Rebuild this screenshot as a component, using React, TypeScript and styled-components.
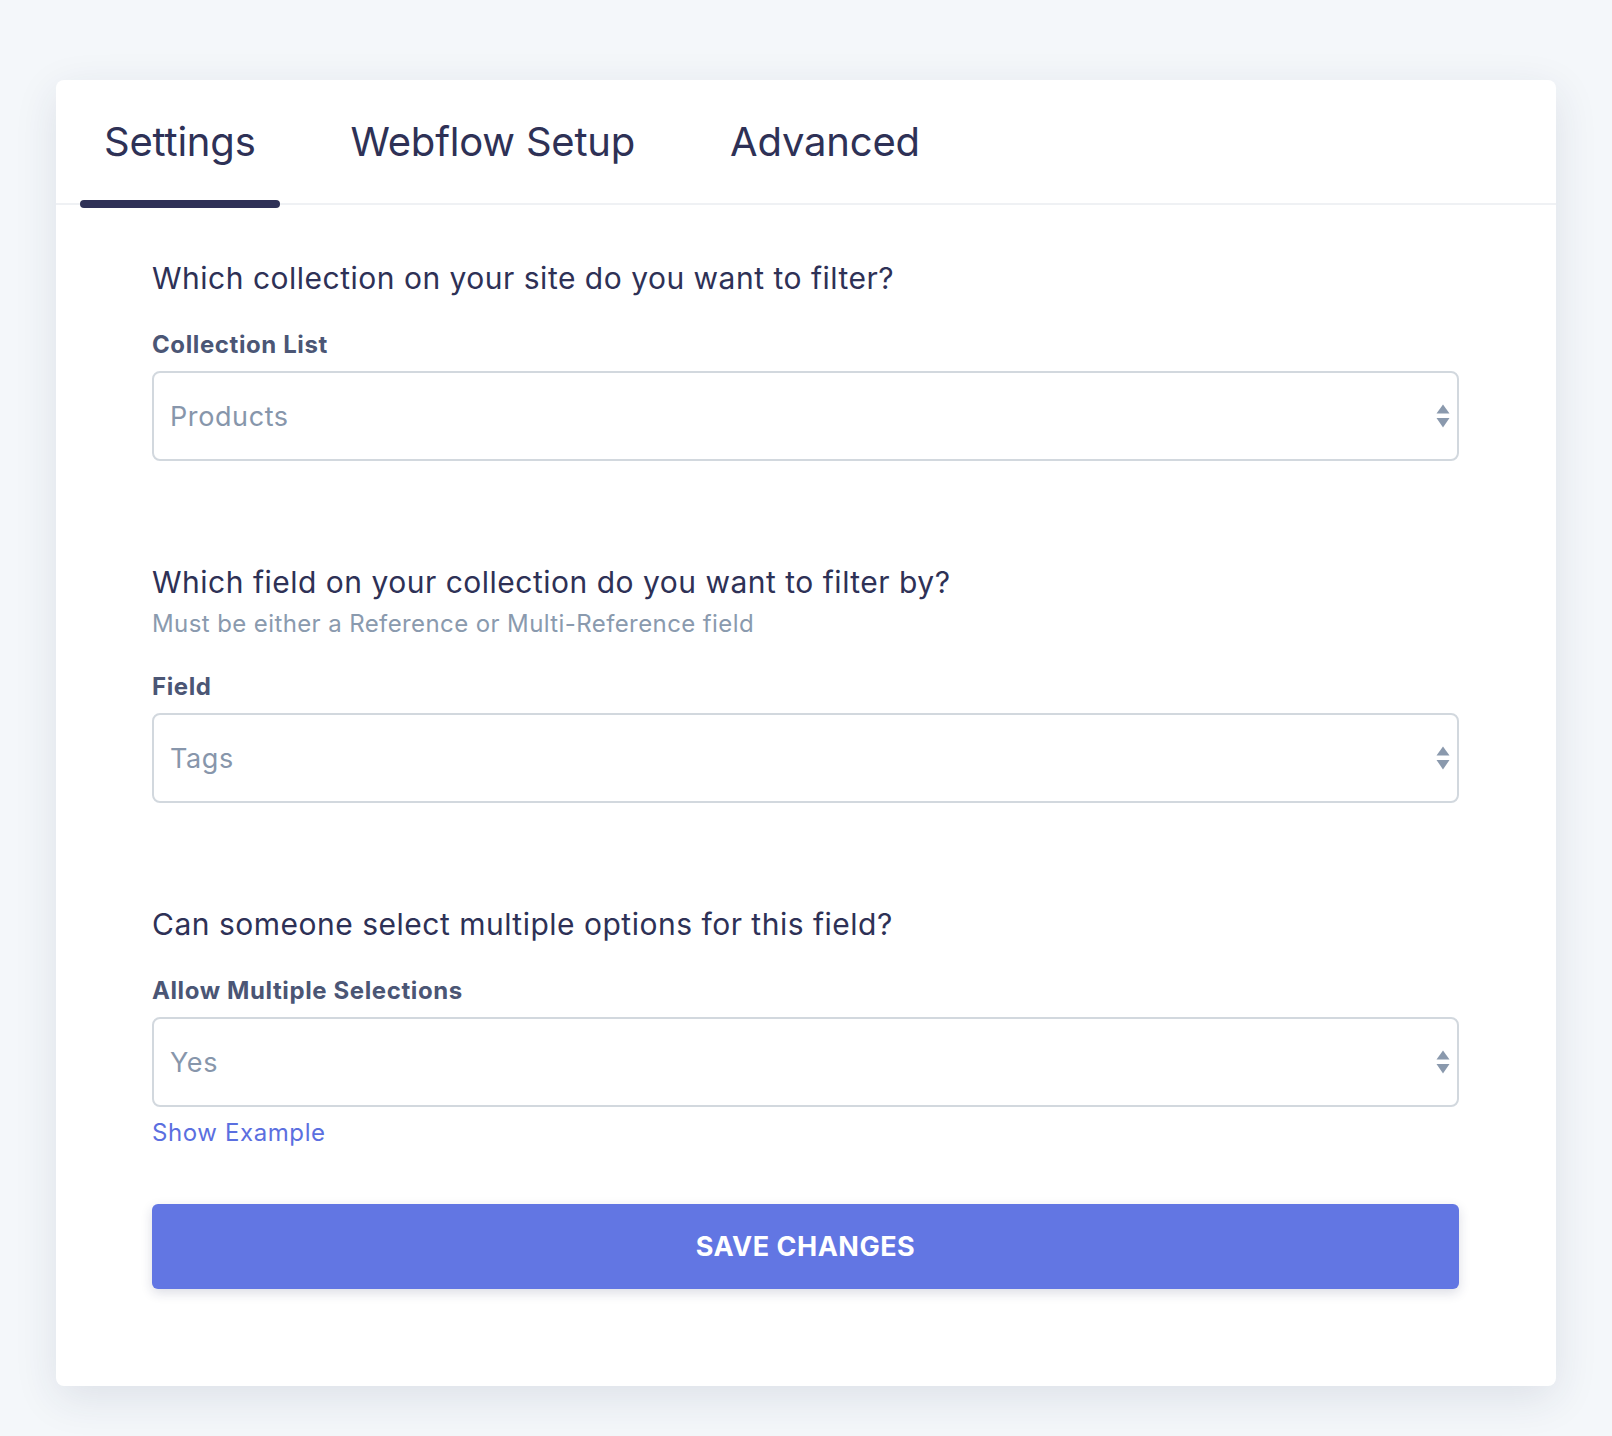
import React, { useState } from "react";
import styled, { createGlobalStyle } from "styled-components";

const GlobalStyle = createGlobalStyle`
  html, body {
    margin: 0;
    padding: 0;
    background: #f4f7fa;
  }
  body {
    font-family: Inter, "Noto Sans", sans-serif;
    -webkit-font-smoothing: antialiased;
  }
  * {
    box-sizing: border-box;
  }
`;

const Page = styled.div`
  padding: 80px 56px 50px;
`;

const Card = styled.div`
  background: #ffffff;
  border-radius: 8px;
  box-shadow: 0 12px 44px rgba(40, 50, 80, 0.11);
  height: 1306px;
  display: flex;
  flex-direction: column;
`;

const TabBar = styled.div`
  display: flex;
  gap: 47px;
  height: 125px;
  padding: 38px 24px 0;
  border-bottom: 2px solid #eff1f4;
`;

const Tab = styled.button<{ $active?: boolean }>`
  position: relative;
  height: 85px;
  padding: 0 24px;
  border: none;
  background: none;
  cursor: pointer;
  font-family: inherit;
  font-size: 40px;
  line-height: 48px;
  font-weight: 400;
  letter-spacing: -0.2px;
  color: #2e3156;
  display: flex;
  align-items: flex-start;

  &::after {
    content: "";
    display: ${(p) => (p.$active ? "block" : "none")};
    position: absolute;
    left: 0;
    right: 0;
    bottom: -5px;
    height: 8px;
    border-radius: 4px;
    background: #2f3157;
  }
`;

const Content = styled.div`
  padding: 56px 97px 0 96px;
  display: flex;
  flex-direction: column;
`;

const Section = styled.div`
  display: flex;
  flex-direction: column;
  & + & {
    margin-top: 104px;
  }
`;

const Question = styled.div`
  font-size: 30px;
  line-height: 34px;
  letter-spacing: 0.5px;
  color: #2e3156;
`;

const Hint = styled.div`
  margin-top: 10px;
  font-size: 24px;
  line-height: 30px;
  letter-spacing: 0.4px;
  color: #8a9aae;
`;

const Label = styled.div<{ $gap: number }>`
  margin-top: ${(p) => p.$gap}px;
  font-size: 24px;
  line-height: 28px;
  font-weight: 700;
  letter-spacing: 0.6px;
  color: #4b5675;
`;

const SelectBox = styled.div`
  margin-top: 12px;
  height: 90px;
  border: 2px solid #d2d8de;
  border-radius: 8px;
  display: flex;
  align-items: center;
  justify-content: space-between;
  padding: 0 7px 0 16px;
  cursor: pointer;
`;

const SelectValue = styled.span`
  font-size: 27px;
  letter-spacing: 0.6px;
  color: #8796ab;
`;

const LinkText = styled.a`
  margin-top: 11px;
  font-size: 24px;
  line-height: 30px;
  letter-spacing: 0.6px;
  color: #5b6fe0;
  text-decoration: none;
  cursor: pointer;
  align-self: flex-start;
`;

const SaveButton = styled.button`
  margin-top: 56px;
  height: 85px;
  border: none;
  border-radius: 6px;
  background: #6276e3;
  color: #ffffff;
  font-family: inherit;
  font-size: 27px;
  font-weight: 700;
  letter-spacing: 0.5px;
  text-transform: uppercase;
  box-shadow: 0 4px 12px rgba(30, 40, 90, 0.16);
  cursor: pointer;
`;

const Arrows = () => (
  <svg width="14" height="24" viewBox="0 0 14 24" fill="#8a99ad">
    <path d="M0.5 9.5 L7 0.5 L13.5 9.5 Z" />
    <path d="M0.5 14 L13.5 14 L7 23.5 Z" />
  </svg>
);

const Select = ({ value }: { value: string }) => (
  <SelectBox>
    <SelectValue>{value}</SelectValue>
    <Arrows />
  </SelectBox>
);

const tabs = ["Settings", "Webflow Setup", "Advanced"];

export default function App() {
  const [active, setActive] = useState("Settings");

  return (
    <>
      <GlobalStyle />
      <Page>
        <Card>
          <TabBar>
            {tabs.map((t) => (
              <Tab key={t} $active={t === active} onClick={() => setActive(t)}>
                {t}
              </Tab>
            ))}
          </TabBar>
          <Content>
            <Section>
              <Question>Which collection on your site do you want to filter?</Question>
              <Label $gap={36}>Collection List</Label>
              <Select value="Products" />
            </Section>
            <Section>
              <Question>Which field on your collection do you want to filter by?</Question>
              <Hint>Must be either a Reference or Multi-Reference field</Hint>
              <Label $gap={34}>Field</Label>
              <Select value="Tags" />
            </Section>
            <Section>
              <Question>Can someone select multiple options for this field?</Question>
              <Label $gap={36}>Allow Multiple Selections</Label>
              <Select value="Yes" />
              <LinkText>Show Example</LinkText>
            </Section>
            <SaveButton>Save Changes</SaveButton>
          </Content>
        </Card>
      </Page>
    </>
  );
}
